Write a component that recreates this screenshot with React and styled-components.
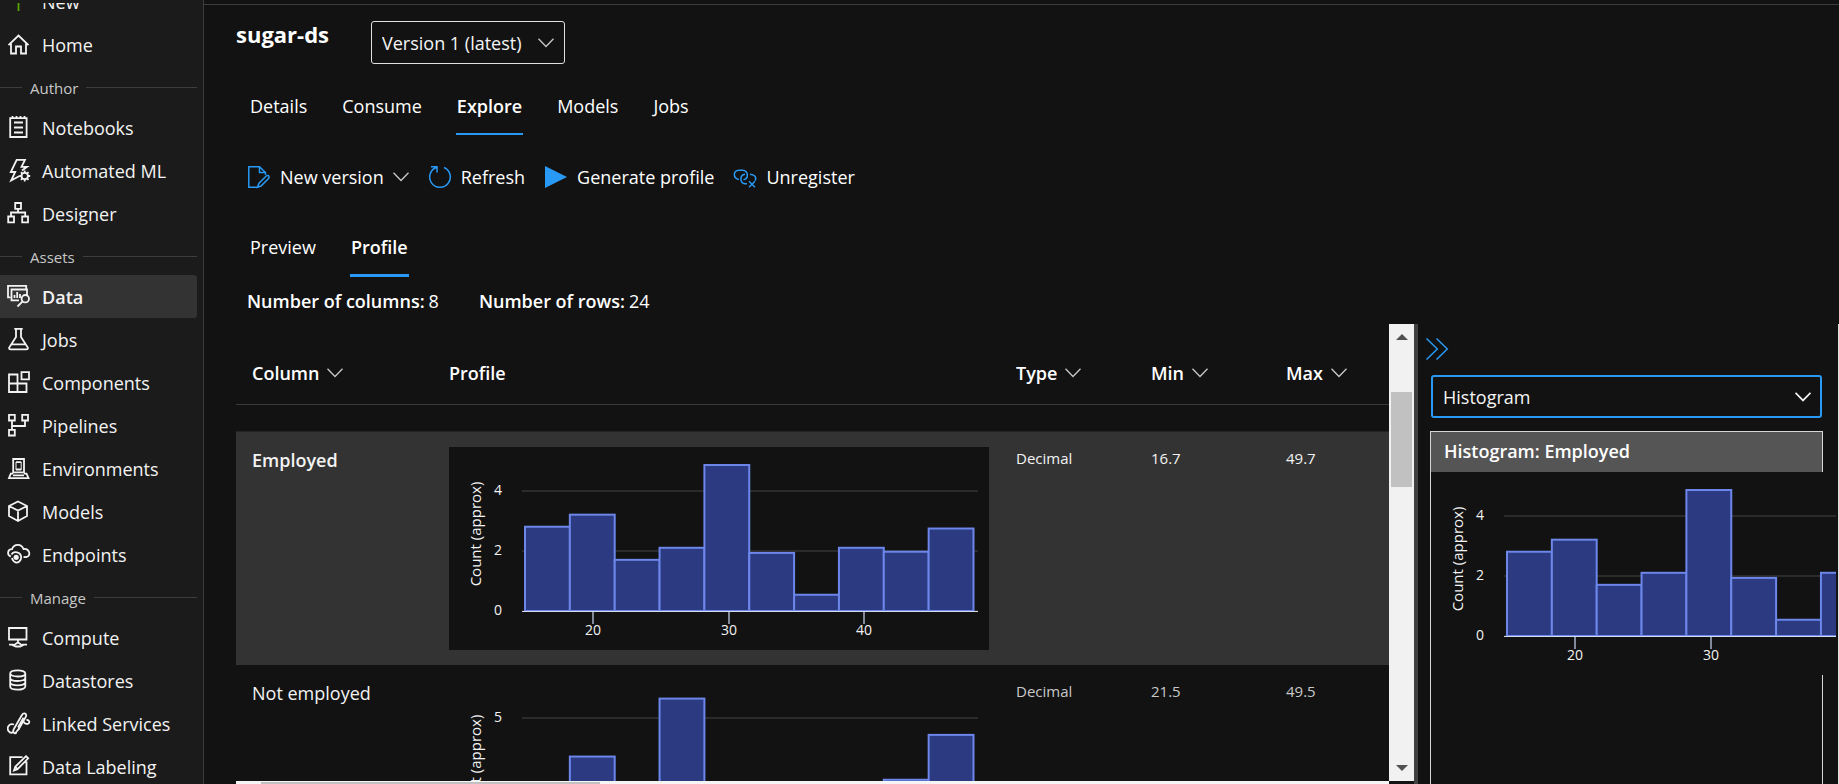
import React from 'react';
import styled, { createGlobalStyle } from 'styled-components';

const GlobalStyle = createGlobalStyle`
  *, *::before, *::after { box-sizing: border-box; }
  html, body, #root { height: 100%; }
  body {
    margin: 0;
    overflow: hidden;
    background: #121212;
    color: #fff;
    font-family: "Open Sans", "Noto Sans", sans-serif;
    font-size: 18px;
    line-height: 24px;
  }
  button, select { font: inherit; color: inherit; }
`;

const Shell = styled.div`
  display: flex;
  height: 100vh;
  overflow: hidden;
`;

/* ---------- sidebar ---------- */

const Sidebar = styled.aside`
  flex: none;
  width: 204px;
  padding-top: 3px;
  background: #1b1b1b;
  border-right: 1px solid #3d3d3d;
`;

const NavViewport = styled.nav`
  height: 100%;
  overflow: hidden;
`;

const NavList = styled.ul`
  list-style: none;
  margin: -23px 6px 0 0;
  padding: 0;
`;

const NavLink = styled.a`
  display: flex;
  align-items: center;
  gap: 11px;
  height: 43px;
  padding-left: 7px;
  border-radius: 0 3px 3px 0;
  color: #f3f3f3;
  text-decoration: none;
  white-space: nowrap;
  background: ${(p) => (p.$active ? '#333' : 'transparent')};
  font-weight: ${(p) => (p.$active ? 600 : 400)};
`;

const NavSection = styled.li`
  display: flex;
  align-items: center;
  gap: 8px;
  height: 40px;
  padding-top: 3px;
  color: #c8c8c8;
  font-size: 15px;

  &::before, &::after {
    content: '';
    height: 1px;
    background: #3d3d3d;
  }
  &::before { width: 22px; }
  &::after { flex: 1; }
`;

const IconSvg = styled.svg`
  flex: none;
  display: block;
  fill: none;
  stroke: ${(p) => p.$color || 'currentColor'};
  stroke-width: ${(p) => p.$weight || 1.5};
`;

const glyphs = {
  New: <path d="M11.5 2V21M2 11.500H21" stroke="#57a300" />,
  Home: <path d="M1.500 12.200 11.500 2.600 21.500 12.200M4 10.500V20.500H9V13.500H14V20.500H19V10.500" />,
  Notebooks: (
    <>
      <path d="M3.200 2.200H19.600V21H3.200Z" />
      <path d="M5.500 0V2M9.500 0V2M13.500 0V2M17.500 0V2" />
      <path d="M7 6.500H16M7 11.500H16M7 16.500H16" />
    </>
  ),
  'Automated ML': (
    <>
      <path d="M12.500 17 4.200 21.500 8.200 13H3.800L9.700 .8H18L14.500 7.800H20L15 11.500" />
      <circle cx="17.700" cy="17" r="3.200" />
      <path d="M17.700 11.500V14M17.700 20V22.500M12.300 17H14.500M21 17H23.200M13.900 13.200 15.500 14.800M20 19.300 21.500 20.800M13.900 20.800 15.500 19.200M20 14.700 21.500 13.200" />
    </>
  ),
  Designer: (
    <path d="M8.200 1H14V6.800H8.200ZM1.200 14.500H7V20.300H1.200ZM15.200 14.500H21V20.300H15.200ZM11 7V10.500M4 14.500V10.500H18.200V14.500" />
  ),
  Data: (
    <>
      <path d="M3.500 12.300H1V.9H19.200V4.200" />
      <path d="M12 15.300H4.500V4.500H20V10" />
      <path d="M7.500 13V10M10.200 13V7M13 13V9" />
      <circle cx="18.300" cy="13.700" r="3.700" />
      <path d="M15.600 16.300 10.500 21.500" />
    </>
  ),
  Jobs: <path d="M7.300 .8H15.700M9 1V9L2.200 19.500Q1.800 21.300 3.500 21.300H19.500Q21.200 21.300 20.800 19.500L14 9V1M4.800 16.300H18.200" />,
  Components: <path d="M2 3.500H10.500V12.500H2ZM2 12.500H10.500V21H2ZM10.500 12.500H19.500V21H10.500ZM14.500 1.200H22V8.300H14.500Z" />,
  Pipelines: <path d="M2 .8H7.800V6.500H2ZM15.200 .8H21V6.500H15.200ZM2 15.800H7.800V21.500H2ZM5 6.500V15.800M5 12H18V6.500" />,
  Environments: (
    <>
      <path d="M6.200 16.500V2H17V16.500" />
      <path d="M9 5.200H14.200M9 12.500H14.200M7 15.300H16" />
      <path d="M9 5V13M14.200 5V13" strokeWidth="1" />
      <path d="M6 16.700H3.800L2 21.200H21.500L19.500 16.700H17M6 18.300H17" />
    </>
  ),
  Models: <path d="M11 1.500 20 6V16L11 21 2 16V6ZM2 6 11 10.500 20 6M11 10.500V21" />,
  Endpoints: (
    <>
      <path d="M4 13.500C-.3 12.200 .3 6.200 5 6.200C7 .5 14.500 .5 16.500 6C22.500 5.300 24.500 12.500 19.500 14L16.500 14.200" />
      <path d="M4.500 11.500C6.500 7.500 14 8.700 14.200 14.200C14.200 18 11 20 8.500 19.500M5 15C5.500 18 8 19.500 9.500 19.300" />
      <circle cx="9.200" cy="14.300" r="2.600" fill="currentColor" stroke="none" />
    </>
  ),
  Compute: (
    <>
      <path d="M2 2H19.500V13.500H2Z" />
      <path d="M11 14V16M2 18.700H6.500M15 18.700H20M6.500 19.500 11 16.300 15.200 19.500 13 20.500H9Z" />
    </>
  ),
  Datastores: (
    <path d="M3.200 4.500C3.200 .3 18.300 .3 18.300 4.500C18.300 8.500 3.200 8.500 3.200 4.500ZM3.200 4.500V17.500C3.200 21.700 18.300 21.700 18.300 17.500V4.500M3.200 9C3.200 13 18.300 13 18.300 9M3.200 13.300C3.200 17.300 18.300 17.300 18.300 13.300" />
  ),
  'Linked Services': (
    <>
      <path d="M9.500 20.800C7 22.500 5.200 19.500 7 16.800L14.800 3.200C16.800 -.2 20.500 1.700 18.700 5L11.200 18" />
      <path d="M11 15.500 16.500 5.800M8.500 21 12 16.500" />
      <path d="M7 12.500C2 10.800-.8 16 1.700 19.200C3 21 5 20.800 6.300 20" />
      <path d="M16.500 9.800C18 12.500 20.800 12.500 22 11C23 9.200 21.500 7.800 19.500 8" />
    </>
  ),
  'Data Labeling': (
    <path d="M15.500 2.200H3.200V19.300H19.500V6.500M7 15.500 8.200 11.800 19 1.200 21.200 3.300 10.500 14.200ZM8.200 11.800 10.500 14.200" />
  ),
};

const nav = [
  { items: ['New', 'Home'] },
  { title: 'Author', items: ['Notebooks', 'Automated ML', 'Designer'] },
  { title: 'Assets', items: ['Data', 'Jobs', 'Components', 'Pipelines', 'Environments', 'Models', 'Endpoints'] },
  { title: 'Manage', items: ['Compute', 'Datastores', 'Linked Services', 'Data Labeling'] },
];

/* ---------- main column ---------- */

const Main = styled.main`
  flex: 1;
  min-width: 0;
  display: flex;
  flex-direction: column;
  padding-top: 4px;
`;

const Page = styled.div`
  flex: 1;
  min-height: 0;
  display: flex;
  flex-direction: column;
  padding-left: 32px;
  border-top: 1px solid #3d3d3d;
`;

const TitleRow = styled.header`
  display: flex;
  align-items: flex-start;
  gap: 40px;
  padding-top: 16px;
`;

const Title = styled.h1`
  margin: 0;
  width: 95px;
  font-size: 22px;
  line-height: 26px;
  font-weight: 700;
  white-space: nowrap;
`;

const SelectBox = styled.span`
  display: grid;
  grid-template-columns: 1fr auto;
  align-items: center;
  height: 43px;
  width: ${(p) => (p.$wide ? 'auto' : '194px')};
  border: ${(p) => (p.$wide ? '2px solid #2899f5' : '1px solid #e0e0e0')};
  border-radius: 3px;

  svg {
    grid-area: 1 / 2;
    margin-right: ${(p) => (p.$wide ? 9 : 10)}px;
    pointer-events: none;
  }
`;

const Select = styled.select`
  grid-area: 1 / 1 / 2 / 3;
  width: 100%;
  height: 100%;
  padding: 0 30px 0 10px;
  border: 0;
  outline: 0;
  appearance: none;
  background: transparent;
  color: #f5f5f5;
`;

const Tabs = styled.div`
  display: flex;
  gap: 33px;
  padding-left: 13px;
  margin-top: ${(p) => p.$top}px;
`;

const Tab = styled.button`
  height: ${(p) => p.$height}px;
  padding: 2px 1px 0;
  border: 0;
  border-bottom: ${(p) => p.$line}px solid ${(p) => (p.$active ? '#2899f5' : 'transparent')};
  background: none;
  font-weight: ${(p) => (p.$active ? 600 : 400)};
  white-space: nowrap;
`;

const Toolbar = styled.div`
  display: flex;
  align-items: center;
  gap: 19px;
  height: 44px;
  margin-top: 20px;
  padding-left: 11px;
`;

const Command = styled.button`
  display: flex;
  align-items: center;
  gap: 9px;
  padding: 0;
  border: 0;
  background: none;
  white-space: nowrap;
`;

const Facts = styled.dl`
  display: flex;
  gap: 40px;
  margin: 12px 0 0;
  padding-left: 11px;

  div { display: flex; gap: 4px; }
  dt { font-weight: 600; }
  dd { margin: 0; }
`;

const Workspace = styled.div`
  flex: 1;
  min-height: 0;
  display: flex;
  margin-top: 11px;
`;

const GridPane = styled.div`
  flex: 1;
  min-width: 0;
  display: flex;
  flex-direction: column;
`;

const GridViewport = styled.div`
  flex: 1;
  min-height: 0;
  overflow: hidden;
`;

const HorizontalBar = styled.div`
  height: 3px;
  padding: 1px 789px 0 25px;
  background: #f5f5f5;

  &::before {
    content: '';
    display: block;
    height: 2px;
    background: #c1c1c1;
  }
`;

const Table = styled.table`
  width: 100%;
  table-layout: fixed;
  border-collapse: separate;
  border-spacing: 0;
`;

const HeadCell = styled.th`
  height: 81px;
  padding: 18px 0 0 16px;
  border-bottom: 1px solid #3a3a3a;
  text-align: left;
  font-weight: 600;
`;

const SortButton = styled.button`
  display: flex;
  align-items: center;
  gap: 8px;
  padding: 0;
  border: 0;
  background: none;
`;

const SpacerCell = styled.td`
  height: 27px;
  padding: 0;
  border-bottom: 1px solid #242424;
`;

const Row = styled.tr`
  background: ${(p) => (p.$selected ? '#333' : 'transparent')};
  color: ${(p) => (p.$selected ? '#f3f3f3' : '#c8c8c8')};
`;

const Cell = styled.td`
  height: 233px;
  padding: 15px 0 15px 16px;
  vertical-align: top;
  font-size: 15px;
  line-height: 22px;
`;

const NameCell = styled.th`
  padding: 16px 0 0 16px;
  vertical-align: top;
  text-align: left;
  color: #f3f3f3;
  font-weight: ${(p) => (p.$selected ? 600 : 400)};
`;

const VerticalBar = styled.div`
  flex: none;
  display: flex;
  flex-direction: column;
  align-items: center;
  width: 25px;
  margin-bottom: 3px;
  padding: 10px 2px;
  background: #f1f1f1;
`;

const Thumb = styled.div`
  width: 100%;
  height: 95px;
  margin: 52px 0 auto;
  background: #c1c1c1;
`;

const BarArrow = styled.svg`
  display: block;
  fill: #505050;
`;

const Divider = styled.div`
  flex: none;
  width: 4px;
  background: #404040;
`;

const SidePane = styled.section`
  flex: none;
  display: flex;
  flex-direction: column;
  width: 421px;
  padding-left: 12px;
  border-right: 1px solid #e0e0e0;
`;

const CollapseButton = styled.button`
  align-self: flex-start;
  width: 24px;
  height: 24px;
  margin: 13px 0 14px -5px;
  padding: 0;
  border: 0;
  background: none;
`;

const SelectSlot = styled.div`
  margin: 0 16px 13px 1px;
`;

const Card = styled.div`
  flex: 1;
  min-height: 0;
  margin-right: 15px;
  border: 1px solid #d6d6d6;
  border-bottom: 0;
`;

const CardTitle = styled.h2`
  margin: 0;
  padding: 7px 13px 9px;
  background: #555;
  font-size: 18px;
  line-height: 24px;
  font-weight: 600;
`;

const CardChart = styled.div`
  margin-right: -14px;
  overflow: hidden;
`;

const ChartSvg = styled.svg`
  display: block;
  background: #121212;
  font-size: 14px;
  fill: #f3f3f3;
`;

/* ---------- drawings ---------- */

const Chevron = ({ color = '#c8c8c8', weight = 1.3 }) => (
  <IconSvg width="16" height="10" viewBox="0 0 16 10" $color={color} $weight={weight} aria-hidden="true">
    <path d="M.5 .8 8 8.500 15.500 .8" />
  </IconSvg>
);

const BLUE = '#2899f5';

const commandIcons = {
  edit: (
    <IconSvg width="24" height="24" viewBox="0 0 24 24" $color={BLUE} aria-hidden="true">
      <path d="M10 22.300H1.800V1.800H12.500L18.500 7.500V10M12.500 1.800V7.500H18.500" />
      <path d="M10.500 22.300 12 18.200 19.500 10.800Q21.500 9.800 22 11.500 22.500 12.500 21.300 13.700L14 21Z" />
    </IconSvg>
  ),
  refresh: (
    <IconSvg width="24" height="24" viewBox="0 0 24 24" $color={BLUE} aria-hidden="true">
      <path d="M3 1.800H9V7.500M8.800 2.200A10.300 10.300 0 1 0 16 2.500" />
    </IconSvg>
  ),
  play: (
    <IconSvg width="24" height="24" viewBox="0 0 24 24" aria-hidden="true">
      <path d="M1 1 23 12 1 23Z" fill={BLUE} stroke="none" />
    </IconSvg>
  ),
  unlink: (
    <IconSvg width="24" height="24" viewBox="0 0 24 24" $color={BLUE} aria-hidden="true">
      <path d="M6 14.500C-.2 13.500-.2 5.500 6 5.200H9.500C15.500 5.500 16 14 10.500 14.700" />
      <path d="M12 9.200C6.500 9.800 6.500 18 12 18.800H14M17 9.200C21.500 9.500 24 12.500 22 15.500" />
      <path d="M16 16.300 22 22.300M22 16.300 16 22.300" />
    </IconSvg>
  ),
};

const CHART = { width: 540, height: 203, left: 73, right: 529, base: 164, first: 76, step: 44.85 };

function Histogram({ data }) {
  const y = (v) => CHART.base - v * data.unit;
  return (
    <ChartSvg width={CHART.width} height={CHART.height} role="img" aria-label={`Histogram of ${data.name}`}>
      {data.ticks.map((t) => (
        <g key={t}>
          <line x1={CHART.left} x2={CHART.right} y1={Math.round(y(t))} y2={Math.round(y(t))} stroke="#2b2b2b" strokeWidth="2" />
          <text x="53" y={Math.round(y(t)) + 4} textAnchor="end">{t}</text>
        </g>
      ))}
      {data.bars.map((v, i) => (
        <rect
          key={i}
          x={CHART.first + i * CHART.step}
          y={y(v)}
          width={CHART.step}
          height={v * data.unit}
          fill="#2c3a82"
          stroke="#6c86ea"
          strokeWidth="2"
        />
      ))}
      <line x1={CHART.left} x2={CHART.right} y1="164.500" y2="164.500" stroke="#d5dcf0" />
      {[[20, 144], [30, 280], [40, 415]].map(([label, x]) => (
        <g key={label}>
          <line x1={x} x2={x} y1="165" y2="177" stroke="#a9b2c6" strokeWidth="1.500" />
          <text x={x} y="188" textAnchor="middle">{label}</text>
        </g>
      ))}
      <text transform="translate(32 87) rotate(-90)" textAnchor="middle" fontSize="15">Count (approx)</text>
    </ChartSvg>
  );
}

const rows = [
  {
    name: 'Employed', type: 'Decimal', min: '16.7', max: '49.7', selected: true,
    unit: 30.1, ticks: [0, 2, 4], bars: [2.8, 3.2, 1.7, 2.1, 4.85, 1.93, 0.54, 2.1, 1.97, 2.74],
  },
  {
    name: 'Not employed', type: 'Decimal', min: '21.5', max: '49.5', selected: false,
    unit: 25.2, ticks: [0, 5], bars: [1, 3.47, 2, 5.77, 2, 1, 1.5, 2, 2.55, 4.33],
  },
];

function NavGroup({ title, items }) {
  return (
    <>
      {title && <NavSection>{title}</NavSection>}
      {items.map((name) => (
        <li key={name}>
          <NavLink href="#" $active={name === 'Data'} aria-current={name === 'Data' ? 'page' : undefined}>
            <IconSvg width="24" height="24" viewBox="0 0 24 24" $weight={1.8} aria-hidden="true">{glyphs[name]}</IconSvg>
            {name}
          </NavLink>
        </li>
      ))}
    </>
  );
}

function TabStrip({ names, active, top, height, line }) {
  return (
    <Tabs role="tablist" $top={top}>
      {names.map((name) => (
        <Tab key={name} type="button" role="tab" aria-selected={name === active} $active={name === active} $height={height} $line={line}>
          {name}
        </Tab>
      ))}
    </Tabs>
  );
}

const SortHead = ({ children }) => (
  <HeadCell scope="col">
    <SortButton type="button">{children}<Chevron /></SortButton>
  </HeadCell>
);

export default function App() {
  return (
    <>
      <GlobalStyle />
      <Shell>
        <Sidebar>
          <NavViewport aria-label="Workspace">
            <NavList>
              {nav.map((group, i) => <NavGroup key={i} {...group} />)}
            </NavList>
          </NavViewport>
        </Sidebar>

        <Main>
          <Page>
            <TitleRow>
              <Title>sugar-ds</Title>
              <SelectBox>
                <Select aria-label="Version" defaultValue="1">
                  <option value="1">Version 1 (latest)</option>
                </Select>
                <Chevron />
              </SelectBox>
            </TitleRow>

            <TabStrip names={['Details', 'Consume', 'Explore', 'Models', 'Jobs']} active="Explore" top={13} height={58} line={2} />

            <Toolbar role="toolbar" aria-label="Data asset actions">
              <Command type="button">{commandIcons.edit}New version<Chevron /></Command>
              <Command type="button">{commandIcons.refresh}Refresh</Command>
              <Command type="button">{commandIcons.play}Generate profile</Command>
              <Command type="button">{commandIcons.unlink}Unregister</Command>
            </Toolbar>

            <TabStrip names={['Preview', 'Profile']} active="Profile" top={18} height={60} line={3} />

            <Facts>
              <div><dt>Number of columns:</dt><dd>8</dd></div>
              <div><dt>Number of rows:</dt><dd>24</dd></div>
            </Facts>

            <Workspace>
              <GridPane>
                <GridViewport>
                  <Table>
                    <colgroup>
                      <col style={{ width: 197 }} />
                      <col style={{ width: 567 }} />
                      <col style={{ width: 135 }} />
                      <col style={{ width: 135 }} />
                      <col />
                    </colgroup>
                    <thead>
                      <tr>
                        <SortHead>Column</SortHead>
                        <HeadCell scope="col">Profile</HeadCell>
                        <SortHead>Type</SortHead>
                        <SortHead>Min</SortHead>
                        <SortHead>Max</SortHead>
                      </tr>
                    </thead>
                    <tbody>
                      <tr><SpacerCell colSpan={5} /></tr>
                      {rows.map((row) => (
                        <Row key={row.name} $selected={row.selected}>
                          <NameCell scope="row" $selected={row.selected}>{row.name}</NameCell>
                          <Cell><Histogram data={row} /></Cell>
                          <Cell>{row.type}</Cell>
                          <Cell>{row.min}</Cell>
                          <Cell>{row.max}</Cell>
                        </Row>
                      ))}
                    </tbody>
                  </Table>
                </GridViewport>
                <HorizontalBar />
              </GridPane>

              <VerticalBar>
                <BarArrow width="12" height="6" aria-hidden="true"><path d="M0 6 6 0 12 6Z" /></BarArrow>
                <Thumb />
                <BarArrow width="12" height="6" aria-hidden="true"><path d="M0 0 6 6 12 0Z" /></BarArrow>
              </VerticalBar>
              <Divider />

              <SidePane>
                <CollapseButton type="button" aria-label="Collapse panel">
                  <IconSvg width="24" height="24" viewBox="0 0 24 24" $color={BLUE} aria-hidden="true">
                    <path d="M1.500 1.500 12.300 12 1.500 22.500M11.500 1.500 22.300 12 11.500 22.500" />
                  </IconSvg>
                </CollapseButton>
                <SelectSlot>
                  <SelectBox $wide>
                    <Select aria-label="Chart type" defaultValue="histogram">
                      <option value="histogram">Histogram</option>
                    </Select>
                    <Chevron color="#f0f0f0" weight={1.8} />
                  </SelectBox>
                </SelectSlot>
                <Card>
                  <CardTitle>Histogram: Employed</CardTitle>
                  <CardChart><Histogram data={rows[0]} /></CardChart>
                </Card>
              </SidePane>
            </Workspace>
          </Page>
        </Main>
      </Shell>
    </>
  );
}
